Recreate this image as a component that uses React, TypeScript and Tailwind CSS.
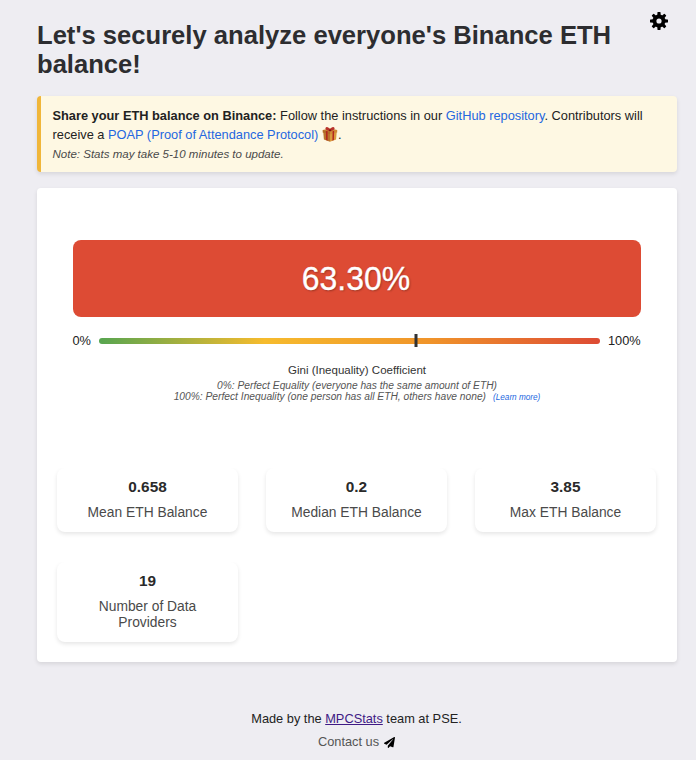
import { FaPaperPlane } from "react-icons/fa";

const stats = [
  { value: "0.658", label: "Mean ETH Balance" },
  { value: "0.2", label: "Median ETH Balance" },
  { value: "3.85", label: "Max ETH Balance" },
  { value: "19", label: "Number of Data Providers" },
];

const teeth = [0, 45, 90, 135, 180, 225, 270, 315];

function GearIcon() {
  return (
    <svg viewBox="-9 -9 18 18" className="h-[18px] w-[18px]">
      {teeth.map((angle) => (
        <path key={angle} d="M-1.800-5-1.500-8.500Q-1.400-9-.9-9H.9Q1.400-9 1.500-8.500L1.800-5z" transform={`rotate(${angle})`} fill="#000" />
      ))}
      <circle r="4.550" fill="none" stroke="#000" strokeWidth="3.900" />
    </svg>
  );
}

function GiftIcon() {
  return (
    <svg viewBox="0 0 16 16" className="inline-block h-4 w-4 align-[-3px]">
      <path d="M1.300 6.200 8 8v7.700L1.900 13.400z" fill="#b8742c" />
      <path d="M8 8l6.700-1.800-.6 7.200L8 15.700z" fill="#d9993f" />
      <path d="M.8 4 8 2.300 15.200 4v2.600L8 8.600.8 6.600z" fill="#cf8a38" />
      <path d="M.8 4 8 5.800v2.800L.8 6.600z" fill="#b06c28" />
      <path d="M3.900 4.800 5.600 5.200v9.500l-1.500-.6zM10.600 5.200l1.500-.4-.2 9.300-1.500.6z" fill="#b3261e" />
      <path d="M8 4.800C5 5 2.800 3.500 3.600 1.800 4.500.2 7.200 1.500 8 3.600 8.800 1.500 11.500.2 12.400 1.800 13.200 3.500 11 5 8 4.800z" fill="#b8322a" />
      <path d="M7 3.600 9 3.600 9.200 5.200 6.800 5.200z" fill="#7d1712" />
    </svg>
  );
}

export default function App() {
  return (
    <div className="relative h-[760px] w-[696px] overflow-hidden bg-[#eeedf2] pl-[37px] pr-[19px] pt-[21px] font-['Liberation_Sans',Arial,sans-serif] text-[#222]">
      <button className="absolute left-[650px] top-[12px]" aria-label="Settings">
        <GearIcon />
      </button>

      <h1 className="w-[600px] text-[25.600px] font-bold leading-[29px] text-[#2d2d30]">
        Let's securely analyze everyone's Binance ETH balance!
      </h1>

      <div className="mt-[17px] h-[76px] rounded-[4px] border-l-4 border-[#f0b63a] bg-[#fef8e3] pl-[11.500px] pt-[10px] text-[12.800px] leading-[19px] shadow-[0_2px_4px_rgba(0,0,0,0.1)]">
        <p>
          <b>Share your ETH balance on Binance:</b> Follow the instructions in our{" "}
          <a className="text-[#2467e0]">GitHub repository</a>. Contributors will
          <br />
          receive a <a className="text-[#2467e0]">POAP (Proof of Attendance Protocol)</a> <GiftIcon />.
        </p>
        <p className="text-[11.520px] italic leading-[20px] text-[#4a4a4a]">
          Note: Stats may take 5-10 minutes to update.
        </p>
      </div>

      <main className="mt-4 h-[474px] rounded-[4px] bg-white pt-[52px] shadow-[0_2px_4px_rgba(0,0,0,0.1)]">
        <div className="mx-9 flex h-[77px] items-center justify-center rounded-[8px] bg-[#dd4b34] pb-[2px] pr-[2px] text-[32px] text-white [-webkit-text-stroke:0.300px_#fff] [text-shadow:1px_1px_2px_rgba(0,0,0,0.3)]">
          <span className="inline-block scale-y-[1.06]">63.30%</span>
        </div>
        <div className="mx-9 mt-[14px] flex h-[20px] items-center text-[12.800px]">
          <span className="-ml-[0.500px] w-[26.500px]">0%</span>
          <div className="relative h-[6px] w-[501px] rounded-[3px] bg-[linear-gradient(to_right,#57a550,#f6bb2d_33%,#f0942a_66%,#dd4b34)]">
            <div className="absolute -top-[4px] left-[63.300%] h-[13px] w-[3px] -translate-x-1/2 bg-[#333]" />
          </div>
          <span className="ml-[8px]">100%</span>
        </div>
        <div className="mt-[11px] text-center">
          <p className="text-[11.520px] leading-[16px] text-[#333]">Gini (Inequality) Coefficient</p>
          <p className="mt-[2px] text-[10.240px] italic leading-[11px] text-[#555]">
            0%: Perfect Equality (everyone has the same amount of ETH)
            <br />
            100%: Perfect Inequality (one person has all ETH, others have none)
            <a className="ml-[7px] text-[8.200px] text-[#2467e0]">(Learn more)</a>
          </p>
        </div>
        <div className="ml-5 mr-[21px] mt-[65px] grid grid-cols-[repeat(3,181px)] items-start justify-between gap-y-[30px]">
          {stats.map((s) => (
            <div key={s.label} className="rounded-[8px] px-5 pb-[12px] pt-[10px] text-center shadow-[0_2px_4px_rgba(0,0,0,0.1)] [clip-path:inset(0_-8px_-8px_-8px)]">
              <div className="text-[15.360px] font-bold leading-[18px] text-[#2a2a2a]">{s.value}</div>
              <div className="mt-[8px] text-[13.820px] leading-[16px] text-[#4a4a4a]">{s.label}</div>
            </div>
          ))}
        </div>
      </main>

      <footer className="mt-[47px] pr-px text-center text-[12.800px]">
        <p className="leading-[20px]">
          Made by the <a className="text-[#3f1a85] underline">MPCStats</a> team at PSE.
        </p>
        <p className="mt-[3px] flex items-center justify-center leading-[20px] text-[#555]">
          Contact us <FaPaperPlane className="ml-[5px] h-[11px] w-[11px] text-black" />
        </p>
      </footer>
    </div>
  );
}
